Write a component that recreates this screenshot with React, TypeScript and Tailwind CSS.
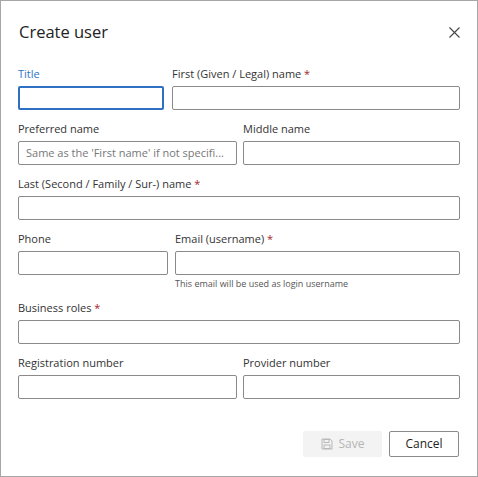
import React from "react";

const Label = ({ children, req, blue }: { children: React.ReactNode; req?: boolean; blue?: boolean }) => (
  <div className={`text-[11px] font-medium leading-[14px] h-[14px] mb-[5px] ${blue ? "text-[#2f73c9]" : "text-[#333]"}`}>
    {children}
    {req && <span className="text-[#a4262c]"> *</span>}
  </div>
);

const Input = ({ focus, ph }: { focus?: boolean; ph?: string }) => (
  <div className={`h-[24px] rounded-[2px] bg-white flex items-center px-[7px] text-[11px] text-[#777] whitespace-nowrap overflow-hidden ${focus ? "border-2 border-[#2f6fc4]" : "border border-[#8a8a8a]"}`}>
    {ph}
  </div>
);

export default function App() {
  return (
    <div className="w-[478px] h-[477px] border border-[#a6a6a6] bg-white relative" style={{ fontFamily: "'Open Sans', sans-serif" }}>
      <div className="flex items-center justify-between pl-[18px] pr-[17px] pt-[19px] h-[42px]">
        <div className="text-[16.5px] text-[#222] font-medium leading-[22px]">Create user</div>
        <svg width="11" height="11" viewBox="0 0 11 11" className="mt-[2px]"><path d="M0.5 0.5L10.5 10.5M10.5 0.5L0.5 10.5" stroke="#444" strokeWidth="1.1" /></svg>
      </div>
      <div className="px-[17px] pt-[24px] flex flex-col">
        <div className="flex gap-[8px]">
          <div className="w-[146px]"><Label blue>Title</Label><Input focus /></div>
          <div className="flex-1"><Label req>First (Given / Legal) name</Label><Input /></div>
        </div>
        <div className="flex gap-[6px] mt-[12px]">
          <div className="w-[219px]"><Label>Preferred name</Label><Input ph="Same as the 'First name' if not specifi..." /></div>
          <div className="flex-1"><Label>Middle name</Label><Input /></div>
        </div>
        <div className="mt-[12px]"><Label req>Last (Second / Family / Sur-) name</Label><Input /></div>
        <div className="flex gap-[7px] mt-[12px]">
          <div className="w-[150px]"><Label>Phone</Label><Input /></div>
          <div className="flex-1"><Label req>Email (username)</Label><Input />
            <div className="text-[9px] text-[#555] mt-[3px] leading-[12px]">This email will be used as login username</div>
          </div>
        </div>
        <div className="mt-[11px]"><Label req>Business roles</Label><Input /></div>
        <div className="flex gap-[6px] mt-[12px]">
          <div className="w-[219px]"><Label>Registration number</Label><Input /></div>
          <div className="flex-1"><Label>Provider number</Label><Input /></div>
        </div>
        <div className="flex justify-end gap-[7px] mt-[32px] pr-[1px]">
          <div className="w-[79px] h-[26px] bg-[#f3f3f3] rounded-[2px] flex items-center justify-center gap-[6px] text-[12px] text-[#b5b5b5]">
            <svg width="12" height="12" viewBox="0 0 12 12"><path d="M1 1h8l2 2v8H1z" fill="none" stroke="#b8b8b8" /><rect x="3" y="1.5" width="5" height="3" fill="none" stroke="#b8b8b8" /><rect x="3" y="7" width="6" height="3.5" fill="none" stroke="#b8b8b8" /></svg>
            Save
          </div>
          <div className="w-[70px] h-[26px] border border-[#8a8a8a] rounded-[2px] flex items-center justify-center text-[12px] text-[#222]">Cancel</div>
        </div>
      </div>
    </div>
  );
}
